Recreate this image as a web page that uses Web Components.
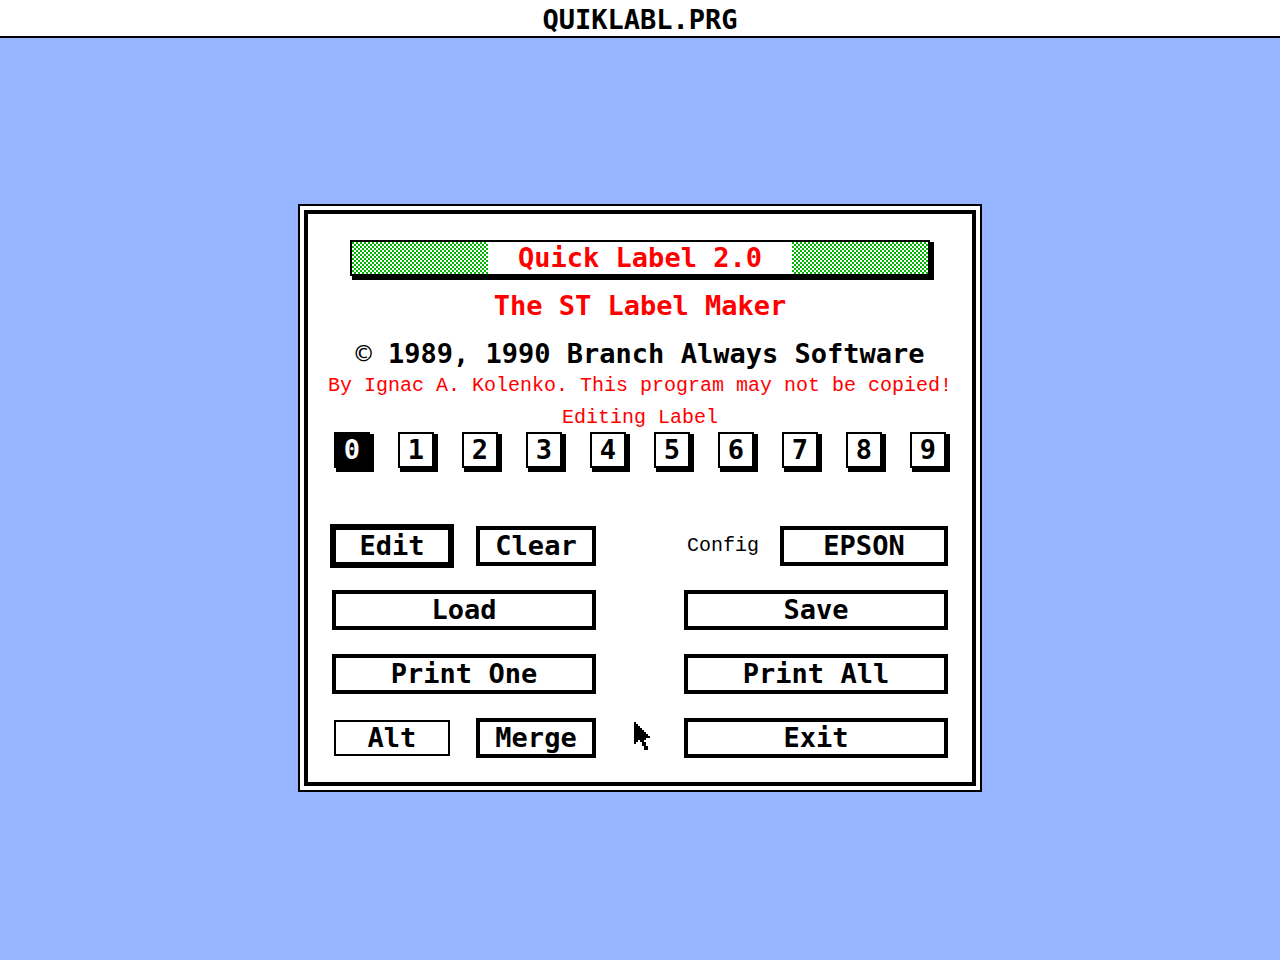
<!DOCTYPE html>
<html lang="en">
<head>
<meta charset="utf-8">
<title>QUIKLABL.PRG</title>
<style>
  html, body { margin: 0; height: 100%; }
  body {
    font: bold 27px/32px "DejaVu Sans Mono", monospace;
    color: #000;
    background: #96b4ff;
  }
</style>
</head>
<body>
<ql-app></ql-app>
<script>
function define(name, html, setup) {
  const tpl = document.createElement('template');
  tpl.innerHTML = html;
  customElements.define(name, class extends HTMLElement {
    constructor() {
      super();
      this.attachShadow({ mode: 'open' }).append(tpl.content.cloneNode(true));
      if (setup) setup(this.shadowRoot, this);
    }
  });
}

define('gem-menubar', `
  <style>
    :host { display: block; background: #fff; border-bottom: 2px solid #000; padding: 4px 0 0; text-align: center; }
    h1 { margin: 0; font: inherit; }
  </style>
  <h1><slot></slot></h1>`);

define('gem-dialog', `
  <style>
    :host { display: block; box-sizing: border-box; background: #fff; border: 2px solid #000; padding: 4px; }
    .frame { border: 4px solid #000; padding: 26px 16px 24px; }
  </style>
  <div class="frame"><slot></slot></div>`);

define('gem-banner', `
  <style>
    :host {
      display: grid; grid-template-columns: 1fr 304px 1fr;
      border: 2px solid #000; box-shadow: 3px 3px 0 1px #000;
      color: #f00; text-align: center;
    }
    .dither { background: repeating-conic-gradient(#fff 0 25%, #00b400 0 50%) 0 0 / 4px 4px; }
    h2 { margin: 0; font: inherit; }
  </style>
  <span class="dither"></span><h2><slot></slot></h2><span class="dither"></span>`);

define('gem-button', `
  <style>
    :host { display: block; }
    button {
      display: block; box-sizing: border-box; width: 100%; margin: 0; padding: 0;
      font: inherit; color: inherit; background: #fff; border: 4px solid #000; border-radius: 0;
    }
    :host([default]) button { box-shadow: 0 0 0 2px #000; }
    :host([toggle]) { padding: 2px; }
    :host([toggle]) button { border-width: 2px; }
    button[aria-pressed="true"] { background: #000; color: #fff; }
  </style>
  <button type="button"><slot></slot></button>`, (root, host) => {
  const b = root.querySelector('button');
  b.addEventListener('click', () => {
    if (host.hasAttribute('toggle'))
      b.setAttribute('aria-pressed', b.getAttribute('aria-pressed') !== 'true');
  });
});

define('gem-choice', `
  <style>
    :host { display: grid; grid-template-columns: 96px 1fr; align-items: center; }
    label { padding-left: 3px; font: 20px/16px "Liberation Mono", monospace; }
    button {
      margin: 0; padding: 0; font: inherit; color: inherit;
      background: #fff; border: 4px solid #000; border-radius: 0;
    }
  </style>
  <label for="choice" id="caption"><slot name="caption"></slot></label>
  <button type="button" id="choice" aria-labelledby="caption choice"><slot></slot></button>`);

define('gem-digits', `
  <style>
    :host { display: block; }
    fieldset { display: flex; justify-content: space-between; margin: 0; padding: 0; border: 0; min-width: 0; }
    label {
      position: relative; width: 32px; text-align: center; background: #fff;
      border: 2px solid #000; box-shadow: 3px 3px 0 1px #000;
    }
    input { position: absolute; inset: 0; margin: 0; appearance: none; }
    label:has(:checked) { background: #000; color: #fff; }
  </style>
  <fieldset aria-label="Label number"></fieldset>`, root => {
  const set = root.querySelector('fieldset');
  for (let i = 0; i < 10; i++) {
    const label = document.createElement('label');
    const input = document.createElement('input');
    input.type = 'radio';
    input.name = 'label';
    input.value = i;
    input.checked = i === 0;
    label.append(input, String(i));
    set.append(label);
  }
});

define('gem-pointer', `
  <style>:host, svg { display: block; }</style>
  <svg width="16" height="28" viewBox="0 0 8 14" shape-rendering="crispEdges" aria-hidden="true">
    <path d="M0 0h1v1h1v1h1v1h1v1h1v1h1v1h1v1h1v1H6v1H5v1h1v2h1v2H5v-2H4v-2H3V9H2v1H1v1H0z"/>
  </svg>`);

define('ql-app', `
  <style>
    :host { display: flex; flex-direction: column; min-height: 100%; }
    main { flex: 1; display: grid; place-content: center; padding-bottom: 2px; }
    gem-banner { margin: 0 26px 14px; }
    p { margin: 0; text-align: center; white-space: nowrap; }
    .tagline { color: #f00; margin-bottom: 16px; }
    .copy { margin-bottom: 8px; }
    .sign { font-weight: normal; }
    .small { font: 20px/16px "Liberation Mono", monospace; }
    .red { color: #f00; margin-bottom: 16px; }
    .red + .red { margin-bottom: 6px; }
    gem-digits { margin: 0 10px; }
    .actions {
      display: grid; grid-template-columns: 120px 24px 120px 88px 264px;
      row-gap: 24px; margin: 58px 8px 0;
    }
    .c1 { grid-column: 1; } .c3 { grid-column: 3; } .c5 { grid-column: 5; }
    .left { grid-column: 1 / 4; }
    gem-pointer { grid-column: 4; justify-self: start; align-self: start; margin: 4px 0 0 38px; }
  </style>
  <gem-menubar>QUIKLABL.PRG</gem-menubar>
  <main>
    <gem-dialog>
      <gem-banner>Quick Label 2.0</gem-banner>
      <p class="tagline">The ST Label Maker</p>
      <p class="copy"><span class="sign">©</span> 1989, 1990 Branch Always Software</p>
      <p class="small red">By Ignac A. Kolenko. This program may not be copied!</p>
      <p class="small red">Editing Label</p>
      <gem-digits></gem-digits>
      <div class="actions">
        <gem-button class="c1" default>Edit</gem-button>
        <gem-button class="c3">Clear</gem-button>
        <gem-choice class="c5"><span slot="caption">Config</span>EPSON</gem-choice>
        <gem-button class="left">Load</gem-button>
        <gem-button class="c5">Save</gem-button>
        <gem-button class="left">Print One</gem-button>
        <gem-button class="c5">Print All</gem-button>
        <gem-button class="c1" toggle>Alt</gem-button>
        <gem-button class="c3">Merge</gem-button>
        <gem-pointer></gem-pointer>
        <gem-button class="c5">Exit</gem-button>
      </div>
    </gem-dialog>
  </main>`);
</script>
</body>
</html>
